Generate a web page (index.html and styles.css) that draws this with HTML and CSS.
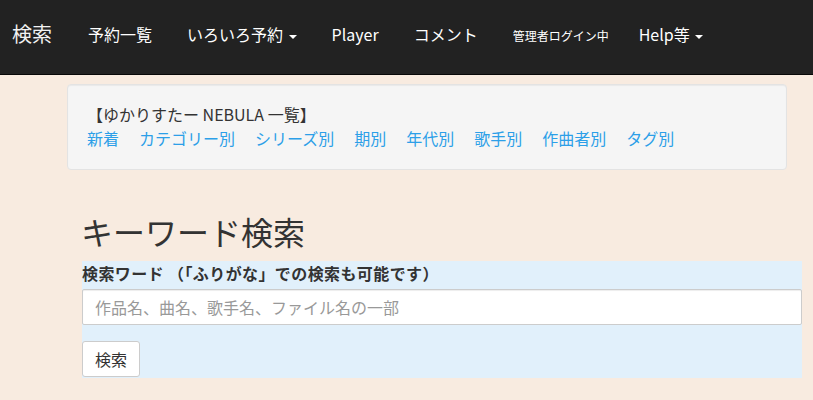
FILE: index.html
```html
<!DOCTYPE html>
<html lang="ja">
<head>
<meta charset="utf-8">
<title>キーワード検索</title>
<link rel="stylesheet" href="styles.css">
</head>
<body>
<nav class="navbar">
  <a class="brand" href="#">検索</a>
  <ul class="nav">
    <li><a href="#">予約一覧</a></li>
    <li><a href="#">いろいろ予約 <span class="caret"></span></a></li>
    <li><a href="#">Player</a></li>
    <li><a href="#">コメント</a></li>
    <li><a href="#" class="small">管理者ログイン中</a></li>
    <li class="help"><a href="#">Help等 <span class="caret"></span></a></li>
  </ul>
</nav>
<div class="page">
  <div class="well">
    <div class="well-title">【ゆかりすたー NEBULA 一覧】</div>
    <div class="well-links">
      <a href="#">新着</a>
      <a href="#">カテゴリー別</a>
      <a href="#">シリーズ別</a>
      <a href="#">期別</a>
      <a href="#">年代別</a>
      <a href="#">歌手別</a>
      <a href="#">作曲者別</a>
      <a href="#">タグ別</a>
    </div>
  </div>
  <div class="search">
    <h2>キーワード検索</h2>
    <form class="search-form">
      <label for="kw">検索ワード （「ふりがな」での検索も可能です）</label>
      <input id="kw" type="text" placeholder="作品名、曲名、歌手名、ファイル名の一部">
      <button type="button">検索</button>
    </form>
  </div>
</div>
</body>
</html>
```

FILE: styles.css
```css
html, body {
  margin: 0;
  padding: 0;
}
body {
  background: #f8ebe0;
  font-family: "Noto Sans CJK JP", "Noto Sans", sans-serif;
  color: #333;
  font-size: 16px;
}
a {
  text-decoration: none;
}
.navbar {
  height: 74px;
  background: #222;
  border-bottom: 1px solid #080808;
  display: flex;
  align-items: flex-start;
}
.brand {
  color: #f2f2f2;
  font-size: 20px;
  line-height: 28px;
  padding: 20px 0 0 12px;
}
.nav {
  list-style: none;
  margin: 0 0 0 36px;
  padding: 0;
  display: flex;
  gap: 35px;
}
.nav li a {
  display: block;
  color: #fff;
  font-size: 16px;
  line-height: 24px;
  padding-top: 22px;
}
.nav li a.small {
  font-size: 12px;
  padding-top: 24px;
}
.nav li.help {
  margin-left: -5px;
}
.caret {
  display: inline-block;
  width: 0;
  height: 0;
  margin-left: 2px;
  vertical-align: middle;
  border-top: 4px solid #fff;
  border-left: 4px solid transparent;
  border-right: 4px solid transparent;
}
.page {
  padding: 9px 0 0 67px;
}
.well {
  box-sizing: border-box;
  width: 720px;
  height: 86px;
  background: #f5f5f5;
  border: 1px solid #e3e3e3;
  border-radius: 4px;
  box-shadow: inset 0 1px 1px rgba(0, 0, 0, 0.05);
  padding: 17px 19px 0;
  line-height: 24px;
}
.well-title {
  color: #333;
}
.well-links {
  display: flex;
  gap: 20px;
}
.well-links a {
  color: #2c9fe8;
}
.search {
  margin-left: 15px;
  width: 720px;
}
.search h2 {
  font-size: 32px;
  font-weight: 400;
  line-height: 40px;
  margin: 41px 0 10px -1px;
  color: #333;
}
.search-form {
  background: #e1f0fb;
  height: 117px;
  margin: 0;
}
.search-form label {
  display: block;
  font-weight: bold;
  font-size: 16px;
  letter-spacing: 0.4px;
  line-height: 22px;
  padding-top: 1px;
}
.search-form input {
  display: block;
  box-sizing: border-box;
  width: 720px;
  height: 36px;
  margin-top: 5px;
  padding: 0 12px;
  border: 1px solid #ccc;
  border-radius: 2px;
  box-shadow: inset 0 1px 1px rgba(0, 0, 0, 0.075);
  font-family: inherit;
  font-size: 16px;
  color: #555;
  background: #fff;
}
.search-form input::placeholder {
  color: #999;
}
.search-form button {
  display: block;
  box-sizing: border-box;
  width: 58px;
  height: 36px;
  margin-top: 16px;
  padding: 0;
  background: #fff;
  border: 1px solid #ccc;
  border-radius: 3px;
  font-family: inherit;
  font-size: 16px;
  color: #333;
}
```
